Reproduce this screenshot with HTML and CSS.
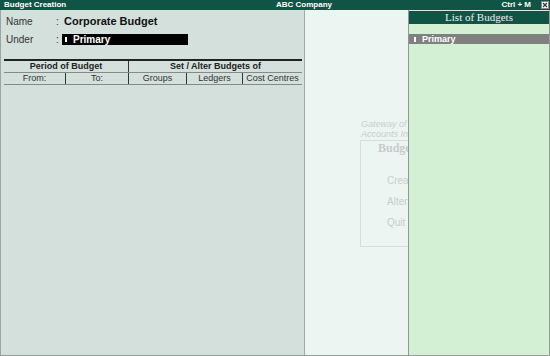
FILE: index.html
```html
<!DOCTYPE html>
<html lang="en">
<head>
    <meta charset="UTF-8">
    <title>Budget Creation</title>
    <link rel="stylesheet" href="styles.css">
</head>
<body>
    <div class="titlebar">
        <span class="title-left">Budget Creation</span>
        <span class="title-mid">ABC Company</span>
        <span class="title-right">Ctrl + M</span>
        <span class="close-box">
            <svg width="8" height="8" viewBox="0 0 8 8"><rect x="0.5" y="0.5" width="7" height="7" fill="#fff" stroke="#888"/><path d="M2 2 L6 6 M6 2 L2 6" stroke="#333" stroke-width="1.2"/></svg>
        </span>
    </div>

    <div class="main">
        <div class="form-panel">
            <div class="field">
                <span class="label">Name</span>
                <span class="colon">:</span>
                <span class="value-big">Corporate Budget</span>
            </div>
            <div class="field under">
                <span class="label">Under</span>
                <span class="colon">:</span>
                <span class="black-box"><i class="marker"></i>Primary</span>
            </div>

            <div class="budget-table">
                <div class="row head">
                    <div class="cell period">Period of Budget</div>
                    <div class="cell setalter">Set / Alter Budgets of</div>
                </div>
                <div class="row sub">
                    <div class="cell c-from">From:</div>
                    <div class="cell c-to">To:</div>
                    <div class="cell c-groups">Groups</div>
                    <div class="cell c-ledgers">Ledgers</div>
                    <div class="cell c-cost">Cost Centres</div>
                </div>
            </div>
        </div>

        <div class="ghost-panel">
            <div class="ghost-caption">Gateway of Tally<br>Accounts Info.</div>
            <div class="ghost-box">
                <div class="ghost-title">Budgets Info.</div>
                <div class="ghost-item first">Create</div>
                <div class="ghost-item">Alter</div>
                <div class="ghost-item">Quit</div>
            </div>
        </div>

        <div class="list-panel">
            <div class="list-head">List of Budgets</div>
            <div class="list-item"><i class="marker"></i>Primary</div>
        </div>
    </div>
</body>
</html>
```

FILE: styles.css
```css
html, body {
    margin: 0;
    padding: 0;
}
body {
    width: 550px;
    height: 356px;
    overflow: hidden;
    font-family: "Liberation Sans", Arial, sans-serif;
    background: #d4e0dc;
}

.titlebar {
    height: 10px;
    background: #0f5444;
    color: #fff;
    font-size: 8px;
    font-weight: bold;
    line-height: 10px;
    display: flex;
    align-items: center;
    position: relative;
}
.title-left {
    padding-left: 4px;
    flex: 1;
}
.title-mid {
    position: absolute;
    left: 276px;
}
.title-right {
    padding-right: 10px;
}
.close-box {
    display: flex;
    margin-right: 1px;
}

.main {
    display: flex;
    height: 346px;
}

.form-panel {
    width: 305px;
    background: #d4e0dc;
    border-left: 1px solid #9aa4a2;
    border-right: 1px solid #a2aaa8;
    border-bottom: 1px solid #9a9a9a;
    box-sizing: border-box;
    color: #2a2a2a;
}

.field {
    display: flex;
    align-items: center;
    height: 16px;
    margin-top: 3px;
    font-size: 10px;
}
.under {
    margin-top: 2px;
}
.label {
    width: 50px;
    padding-left: 5px;
    color: #333;
}
.colon {
    width: 8px;
    color: #333;
}
.value-big {
    font-size: 11px;
    font-weight: bold;
    color: #111;
}
.black-box {
    background: #000;
    color: #fff;
    font-weight: bold;
    font-size: 10px;
    width: 126px;
    height: 11px;
    line-height: 11px;
    display: flex;
    align-items: center;
    margin-left: -2px;
}
.marker {
    display: inline-block;
    width: 2px;
    height: 5px;
    background: #fff;
    margin: 0 6px 0 3px;
}

.budget-table {
    margin: 12px 2px 0 3px;
    font-size: 9px;
    border-top: 2px solid #222;
    border-bottom: 1px solid #888;
}
.row {
    display: flex;
}
.row.head {
    height: 11px;
    line-height: 11px;
    font-weight: bold;
    color: #222;
    border-bottom: 1px solid #888;
}
.row.sub {
    height: 11px;
    line-height: 11px;
    color: #333;
}
.cell {
    text-align: center;
    box-sizing: border-box;
}
.period {
    width: 125px;
    border-right: 1px solid #333;
}
.setalter {
    flex: 1;
}
.c-from {
    width: 62px;
    border-right: 1px solid #333;
}
.c-to {
    width: 63px;
    border-right: 1px solid #333;
}
.c-groups {
    width: 58px;
    border-right: 1px solid #333;
}
.c-ledgers {
    width: 56px;
    border-right: 1px solid #333;
}
.c-cost {
    flex: 1;
}

.ghost-panel {
    width: 103px;
    background: #edf5f3;
    border-bottom: 1px solid #9a9a9a;
    overflow: hidden;
    padding-top: 109px;
    padding-left: 55px;
    box-sizing: border-box;
    color: #c6cecc;
}
.ghost-caption {
    font-size: 9px;
    font-style: italic;
    line-height: 10px;
    white-space: nowrap;
    padding-left: 1px;
}
.ghost-box {
    width: 110px;
    height: 105px;
    border: 1px solid #d6dedc;
    margin-top: 1px;
    white-space: nowrap;
}
.ghost-title {
    font-family: "Liberation Serif", serif;
    font-weight: bold;
    font-size: 12px;
    line-height: 12px;
    color: #c4ccca;
    padding-left: 17px;
    margin-top: 1px;
}
.ghost-item {
    font-size: 10px;
    line-height: 12px;
    padding-left: 26px;
    height: 21px;
}
.ghost-item.first {
    margin-top: 21px;
}

.list-panel {
    flex: 1;
    background: #d3f0d5;
    border-left: 1px solid #8f9a96;
    border-right: 1px solid #9a9a9a;
    border-bottom: 1px solid #9a9a9a;
}
.list-head {
    background: #0f5444;
    color: #f0f0f0;
    font-family: "Liberation Serif", serif;
    font-size: 11px;
    text-align: center;
    height: 13px;
    line-height: 13px;
    margin-top: 1px;
}
.list-item {
    margin-top: 10px;
    height: 10px;
    line-height: 10px;
    background: #808080;
    color: #fff;
    font-weight: bold;
    font-size: 9px;
    display: flex;
    align-items: center;
}
.list-item .marker {
    margin: 0 6px 0 5px;
    height: 5px;
}
```
